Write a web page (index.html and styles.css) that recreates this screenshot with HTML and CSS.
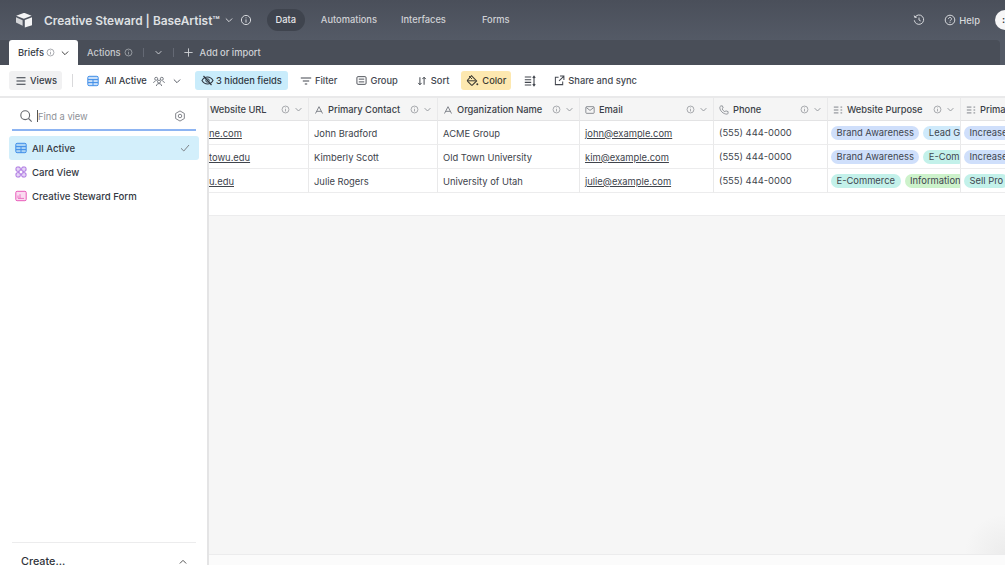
FILE: index.html
```html
<!DOCTYPE html>
<html lang="en">
<head>
<meta charset="utf-8">
<title>Creative Steward | BaseArtist</title>
<link rel="stylesheet" href="styles.css">
</head>
<body>
<svg class="defs" width="0" height="0" aria-hidden="true">
  <defs>
    <symbol id="i-info" viewBox="0 0 12 12"><circle cx="6" cy="6" r="4.6" fill="none" stroke="currentColor"/><path d="M6 3.400v.9M6 5.400v3.200" fill="none" stroke="currentColor"/></symbol>
    <symbol id="i-chev" viewBox="0 0 12 12"><path d="M2.200 4.200 6 8l3.800-3.800" fill="none" stroke="currentColor" stroke-width="1.200"/></symbol>
    <symbol id="i-text" viewBox="0 0 12 12"><path d="M1.800 10.200 6 2l4.200 8.200M3.400 7.600h5.200" fill="none" stroke="currentColor" stroke-width="1.100"/></symbol>
    <symbol id="i-multi" viewBox="0 0 12 12"><path d="M1 2.500h5.500M1 6h5.500M1 9.500h5.500M9 2.500h2M9 6h2M9 9.500h2" fill="none" stroke="currentColor" stroke-width="1.100"/></symbol>
    <symbol id="i-grid" viewBox="0 0 12 12"><rect x=".8" y="1.300" width="10.400" height="9.400" rx="1.300" fill="currentColor" fill-opacity=".28" stroke="currentColor"/><path d="M1 4.600h10M1 7.600h10M6 4.600v6" fill="none" stroke="currentColor"/></symbol>
  </defs>
</svg>
<div class="app">
  <header class="topbar">
    <div class="brand">
      <svg class="logo" viewBox="0 0 18 16"><path d="M8.600 1 1.200 3.800 8.800 6.800 16.600 3.800 9.700 1z" fill="#f4f4f5"/><path d="M9.800 8 17 5.200v8L9.800 15.600z" fill="#f4f4f5"/><path d="M1 5.200 7.600 8.200v5.600L1 10.400z" fill="#d4d5d8"/></svg>
      <span class="brand-name">Creative Steward | BaseArtist™</span>
      <svg class="ico-10 light"><use href="#i-chev"/></svg>
      <svg class="ico-12 light"><use href="#i-info"/></svg>
    </div>
    <nav class="topnav">
      <span class="nav-item active">Data</span>
      <span class="nav-item">Automations</span>
      <span class="nav-item">Interfaces</span>
      <span class="nav-item">Forms</span>
    </nav>
    <div class="top-right">
      <svg class="ico-12 light" viewBox="0 0 12 12"><path d="M1.900 3.300A4.700 4.700 0 1 1 1.300 6.300M1.200 1.500l.7 2 2-.4M6 3.500V6l1.700 1" fill="none" stroke="currentColor"/></svg>
      <span class="help"><svg class="ico-12 light" viewBox="0 0 12 12"><circle cx="6" cy="6" r="4.800" fill="none" stroke="currentColor"/><path d="M4.500 4.800a1.500 1.500 0 1 1 2.200 1.400c-.5.300-.7.500-.7 1.100M6 8.200v.8" fill="none" stroke="currentColor"/></svg>Help</span>
      <span class="avatar">:</span>
    </div>
  </header>

  <div class="tabbar">
    <div class="tabs">
      <span class="tab active">Briefs<svg class="ico-9"><use href="#i-info"/></svg><svg class="ico-10 chev-tab"><use href="#i-chev"/></svg></span>
      <span class="tab second">Actions<svg class="ico-9"><use href="#i-info"/></svg></span>
      <span class="tab-sep"></span>
      <svg class="ico-9 light"><use href="#i-chev"/></svg>
      <span class="tab-sep sep-end"></span>
      <span class="tab add"><svg class="ico-11" viewBox="0 0 12 12"><path d="M6 1.500v9M1.500 6h9" fill="none" stroke="currentColor"/></svg>Add or import</span>
    </div>
  </div>

  <div class="toolbar">
    <span class="tool views"><svg class="ico-12" viewBox="0 0 12 12"><path d="M1.500 2.800h9M1.500 6h9M1.500 9.200h9" fill="none" stroke="currentColor" stroke-width="1.100"/></svg>Views</span>
    <span class="tool-sep"></span>
    <span class="view-name">
      <svg class="ico-12 blue"><use href="#i-grid"/></svg>
      <b>All Active</b>
      <svg class="ico-12" viewBox="0 0 12 12"><circle cx="3.200" cy="3.800" r="1.500" fill="none" stroke="currentColor" stroke-width=".8"/><circle cx="8.800" cy="3.800" r="1.500" fill="none" stroke="currentColor" stroke-width=".8"/><circle cx="6" cy="6.600" r="1.500" fill="none" stroke="currentColor" stroke-width=".8"/><path d="M3.400 11c0-1.500 1.100-2.400 2.600-2.400s2.600.9 2.600 2.400M.6 8c0-1 .8-1.800 1.800-1.800M11.400 8c0-1-.8-1.800-1.800-1.800" fill="none" stroke="currentColor" stroke-width=".8"/></svg>
      <svg class="ico-10 chev-view"><use href="#i-chev"/></svg>
    </span>
    <span class="tool hidden-fields"><svg class="ico-13" viewBox="0 0 13 12"><path d="M1 6c1.400-2.300 3.200-3.500 5.500-3.500S10.600 3.700 12 6c-1.400 2.300-3.200 3.500-5.500 3.500S2.400 8.300 1 6z" fill="none" stroke="currentColor" stroke-width="1.100"/><circle cx="6.500" cy="6" r="1.700" fill="none" stroke="currentColor"/><path d="M2.500 1.500l8 9" fill="none" stroke="currentColor" stroke-width="1.200"/></svg>3 hidden fields</span>
    <span class="tool t-filter"><svg class="ico-12" viewBox="0 0 12 12"><path d="M.8 3h10.400M2.800 6h6.400M4.800 9h2.400" fill="none" stroke="currentColor" stroke-width="1.100"/></svg>Filter</span>
    <span class="tool t-group"><svg class="ico-11" viewBox="0 0 12 12"><rect x="1" y="1.800" width="10" height="8.400" rx="1.200" fill="none" stroke="currentColor"/><path d="M3 4.500h6M3 7.500h6" fill="none" stroke="currentColor"/></svg>Group</span>
    <span class="tool t-sort"><svg class="ico-10" viewBox="0 0 12 12"><path d="M3.500 1.500v9M1.500 8.300l2 2.200 2-2.200M8.500 10.500v-9M6.500 3.700l2-2.200 2 2.200" fill="none" stroke="currentColor" stroke-width="1.200"/></svg>Sort</span>
    <span class="tool color"><svg class="ico-13" viewBox="0 0 13 12"><path d="M5.400 1.200 10.600 6.400 6.600 10.400a1 1 0 0 1-1.400 0L1.700 6.900a1 1 0 0 1 0-1.400z" fill="none" stroke="currentColor" stroke-width="1.100"/><path d="M3 1.500l3 3M2 6.300h7.600" fill="none" stroke="currentColor"/><circle cx="11.300" cy="9.800" r="1" fill="currentColor"/></svg>Color</span>
    <svg class="ico-12 row-height" viewBox="0 0 12 12"><path d="M.8 2h6.400M.8 4.700h6.400M.8 7.400h6.400M.8 10h6.400M10 1.200v9.600M8.800 2.800 10 1.200l1.200 1.600M8.800 9.200l1.200 1.600 1.200-1.600" fill="none" stroke="currentColor" stroke-width="1.100"/></svg>
    <span class="tool t-share"><svg class="ico-11" viewBox="0 0 12 12"><path d="M5 2.500H1.500v8h8V7M6.500 1.200h4.300v4.300M10.600 1.400 5.500 6.500" fill="none" stroke="currentColor" stroke-width="1.100"/></svg>Share and sync</span>
  </div>

  <div class="main">
    <aside class="sidebar">
      <div class="find">
        <svg class="ico-14" viewBox="0 0 14 14"><circle cx="6.200" cy="6.200" r="4.400" fill="none" stroke="currentColor" stroke-width="1.100"/><path d="M9.500 9.500l3.200 3.200" fill="none" stroke="currentColor" stroke-width="1.100"/></svg>
        <span class="caret"></span>
        <span class="find-text">Find a view</span>
        <svg class="ico-12 gear" viewBox="0 0 13 13"><path d="M6.500 1 11.200 3.750V9.250L6.500 12 1.800 9.250V3.750z" fill="none" stroke="currentColor" stroke-linejoin="round"/><circle cx="6.500" cy="6.500" r="1.900" fill="none" stroke="currentColor"/></svg>
      </div>
      <ul class="view-list">
        <li class="view-item selected"><svg class="ico-12 blue"><use href="#i-grid"/></svg>All Active<svg class="ico-10 check" viewBox="0 0 10 10"><path d="M1 5.300 3.800 8 9 2" fill="none" stroke="currentColor"/></svg></li>
        <li class="view-item"><svg class="ico-12 purple" viewBox="0 0 12 12"><rect x="1" y="1" width="4.300" height="4.300" rx="1.300" fill="currentColor" fill-opacity=".3" stroke="currentColor"/><rect x="6.700" y="1" width="4.300" height="4.300" rx="1.300" fill="currentColor" fill-opacity=".3" stroke="currentColor"/><rect x="1" y="6.700" width="4.300" height="4.300" rx="1.300" fill="currentColor" fill-opacity=".3" stroke="currentColor"/><rect x="6.700" y="6.700" width="4.300" height="4.300" rx="1.300" fill="currentColor" fill-opacity=".3" stroke="currentColor"/></svg>Card View</li>
        <li class="view-item"><svg class="ico-12 pink" viewBox="0 0 12 12"><rect x=".8" y="1.300" width="10.400" height="9.400" rx="1.300" fill="currentColor" fill-opacity=".22" stroke="currentColor"/><path d="M3 8.200V5.500M5 8.200V4.200M3 8.400h6" fill="none" stroke="currentColor" stroke-width=".8"/></svg>Creative Steward Form</li>
      </ul>
      <div class="create"><span>Create...</span><svg class="ico-10 flip"><use href="#i-chev"/></svg></div>
    </aside>

    <section class="grid-area">
      <div class="grid">
        <div class="cell head first"><span class="hname">Website URL</span><svg class="ico-9 hi"><use href="#i-info"/></svg><svg class="ico-9 hc"><use href="#i-chev"/></svg></div>
        <div class="cell head"><svg class="ico-10 ht"><use href="#i-text"/></svg><span class="hname">Primary Contact</span><svg class="ico-9 hi"><use href="#i-info"/></svg><svg class="ico-9 hc"><use href="#i-chev"/></svg></div>
        <div class="cell head"><svg class="ico-10 ht"><use href="#i-text"/></svg><span class="hname">Organization Name</span><svg class="ico-9 hi"><use href="#i-info"/></svg><svg class="ico-9 hc"><use href="#i-chev"/></svg></div>
        <div class="cell head"><svg class="ico-10 ht" viewBox="0 0 12 12"><rect x="1" y="2" width="10" height="8" rx="1" fill="none" stroke="currentColor"/><path d="M1.500 3 6 6.500 10.500 3" fill="none" stroke="currentColor"/></svg><span class="hname">Email</span><svg class="ico-9 hi"><use href="#i-info"/></svg><svg class="ico-9 hc"><use href="#i-chev"/></svg></div>
        <div class="cell head"><svg class="ico-10 ht" viewBox="0 0 12 12"><path d="M2 1.200 4 1l1 2.600-1.200 1.100c.6 1.500 1.800 2.700 3.300 3.400L8.300 7l2.700 1-.2 2c-.1.600-.6 1-1.200 1C4.900 10.800 1.200 7.100 1 3.200c0-1 .4-1.800 1-2z" fill="none" stroke="currentColor" stroke-width=".9"/></svg><span class="hname">Phone</span><svg class="ico-9 hi"><use href="#i-info"/></svg><svg class="ico-9 hc"><use href="#i-chev"/></svg></div>
        <div class="cell head"><svg class="ico-10 ht"><use href="#i-multi"/></svg><span class="hname">Website Purpose</span><svg class="ico-9 hi"><use href="#i-info"/></svg><svg class="ico-9 hc"><use href="#i-chev"/></svg></div>
        <div class="cell head last"><svg class="ico-10 ht"><use href="#i-multi"/></svg><span class="hname">Prima</span></div>

        <div class="cell first"><a class="link">ne.com</a></div>
        <div class="cell">John Bradford</div>
        <div class="cell">ACME Group</div>
        <div class="cell"><a class="link">john@example.com</a></div>
        <div class="cell phone">(555) 444-0000</div>
        <div class="cell pills"><span class="pill p-blue">Brand Awareness</span><span class="pill p-sky">Lead G</span></div>
        <div class="cell pills last"><span class="pill p-blue">Increase</span></div>

        <div class="cell first"><a class="link">towu.edu</a></div>
        <div class="cell">Kimberly Scott</div>
        <div class="cell">Old Town University</div>
        <div class="cell"><a class="link">kim@example.com</a></div>
        <div class="cell phone">(555) 444-0000</div>
        <div class="cell pills"><span class="pill p-blue">Brand Awareness</span><span class="pill p-teal">E-Com</span></div>
        <div class="cell pills last"><span class="pill p-blue">Increase</span></div>

        <div class="cell first"><a class="link">u.edu</a></div>
        <div class="cell">Julie Rogers</div>
        <div class="cell">University of Utah</div>
        <div class="cell"><a class="link">julie@example.com</a></div>
        <div class="cell phone">(555) 444-0000</div>
        <div class="cell pills"><span class="pill p-teal">E-Commerce</span><span class="pill p-green">Information</span></div>
        <div class="cell pills last"><span class="pill p-teal">Sell Pro</span></div>
      </div>
      <div class="add-row"></div>
      <div class="canvas"></div>
      <div class="footer"></div>
    </section>
  </div>
</div>
</body>
</html>
```

FILE: styles.css
```css
* { box-sizing: border-box; }
html, body { margin: 0; height: 100%; overflow: hidden; }
body { font-family: Inter, "Liberation Sans", sans-serif; font-size: 9.4px; color: #333842; background: #fff; }
.defs { position: absolute; }
svg { display: block; flex: none; }
.ico-9 { width: 9px; height: 9px; }
.ico-10 { width: 10px; height: 10px; }
.ico-11 { width: 11px; height: 11px; }
.ico-12 { width: 12px; height: 12px; }
.ico-13 { width: 13px; height: 13px; }
.ico-14 { width: 14px; height: 14px; }
.light { color: #d5d7db; }
.blue { color: #3f8ee8; }
.purple { color: #a86fe0; }
.pink { color: #e85bb9; }

.app { display: flex; flex-direction: column; height: 565px; width: 1005px; overflow: hidden; }

/* top bar */
.topbar { height: 40px; flex: none; display: flex; align-items: center; padding-left: 15px; background: linear-gradient(#4a4f5a, #545a66); color: #e6e7e9; }
.brand { display: flex; align-items: center; }
.logo { width: 18px; height: 16px; }
.brand-name { margin-left: 11px; font-size: 11.900px; font-weight: 600; color: #dfe0e3; white-space: nowrap; }
.brand .ico-10 { margin-left: 4px; }
.brand .ico-12 { margin-left: 6px; }
.topnav { display: flex; align-items: center; margin-left: 15px; font-size: 9.300px; }
.nav-item { height: 22px; line-height: 22px; font-weight: 500; color: #cfd1d5; white-space: nowrap; }
.nav-item:nth-child(1) { width: 38px; text-align: center; margin-right: 16px; }
.nav-item:nth-child(2) { margin-right: 24px; }
.nav-item:nth-child(3) { margin-right: 36px; }
.nav-item.active { background: #3f444e; border-radius: 11px; color: #e6e7e9; }
.top-right { margin-left: auto; display: flex; align-items: center; }
.help { display: flex; align-items: center; gap: 3px; margin-left: 19px; font-weight: 500; color: #d8dadd; }
.avatar { width: 20px; height: 20px; margin-left: 15px; margin-right: -10px; border-radius: 50%; background: #f6f6f7; color: #333; padding-left: 7px; line-height: 19px; font-weight: 700; }

/* tabs */
.tabbar { height: 25px; flex: none; background: #545a66; }
.tabs { height: 25px; margin-right: 5px; background: #494e58; border-top-right-radius: 4px; display: flex; align-items: flex-end; padding-left: 9px; color: #c8cace; font-weight: 500; font-size: 9.300px; }
.tab { display: flex; align-items: center; height: 25px; gap: 2px; white-space: nowrap; }
.tab.active { width: 69px; padding-left: 9px; background: #fff; color: #333842; border-radius: 3px 3px 0 0; font-weight: 500; }
.tab.active .ico-9 { color: #8d9097; }
.chev-tab { margin-left: 3px; color: #444; }
.tab.second { margin-left: 9px; gap: 3px; }
.tab.second .ico-9 { color: #aeb1b7; }
.tab-sep { width: 1px; height: 9px; background: #646974; margin: 0 10px 8px 10px; }
.tab-sep.sep-end { margin-right: 9px; }
.tabs > .ico-9 { margin-bottom: 8px; }
.tab.add { gap: 6px; color: #d0d2d6; }

/* toolbar */
.toolbar { height: 33px; flex: none; display: flex; align-items: center; padding-left: 9px; border-bottom: 2px solid #e9e9ea; color: #43474f; font-weight: 500; font-size: 9.300px; }
.tool { display: flex; align-items: center; gap: 3px; height: 19px; border-radius: 3px; white-space: nowrap; }
.views { background: #f1f1f2; padding: 0 5px 0 6px; color: #333842; width: 53px; }
.tool-sep { width: 1px; height: 13px; background: #d9d9db; margin: 0 14px 0 10px; }
.view-name { display: flex; align-items: center; white-space: nowrap; color: #5b5f68; }
.view-name b { font-weight: 500; color: #333842; margin: 0 6px 0 6px; width: 42px; }
.chev-view { margin-left: 7px; }
.hidden-fields { background: #c9ecfb; margin-left: 13px; padding: 0 0 0 6px; color: #2f3742; width: 93px; gap: 2px; }
.t-filter { margin-left: 12px; }
.t-group { margin-left: 19px; }
.t-sort { margin-left: 19px; gap: 4px; }
.color { background: #fde8b0; padding: 0 0 0 5px; width: 50px; color: #3d3b33; margin-left: 12px; margin-right: 13px; gap: 3px; }
.row-height { margin-right: 18px; }

/* main */
.main { flex: 1; min-height: 0; display: flex; }
.sidebar { width: 209px; flex: none; display: flex; flex-direction: column; border-right: 2px solid #e4e4e5; padding: 0 8px 0 9px; }
.find { display: flex; align-items: center; height: 33px; flex: none; margin: 0 3px; padding: 5px 10px 0 7px; border-bottom: 2px solid #8db4f2; color: #66696f; }
.caret { width: 1px; height: 12px; background: #555; margin-left: 4px; }
.find-text { color: #8e9197; font-size: 9.300px; }
.gear { margin-left: auto; color: #787b81; }
.view-list { list-style: none; margin: 5px 0 0; padding: 0; font-size: 9.600px; }
.view-item { display: flex; align-items: center; gap: 5px; height: 24px; padding-left: 6px; color: #333842; font-weight: 500; border-radius: 3px; }
.view-item.selected { background: #d3effb; }
.check { margin-left: auto; margin-right: 9px; color: #7d8288; }
.create { margin: auto 3px 0; height: 23px; flex: none; border-top: 1px solid #ececed; display: flex; align-items: flex-start; justify-content: space-between; padding: 12px 8px 0 9px; font-size: 10.800px; font-weight: 500; color: #2f333a; }
.create span { line-height: 14px; }
.flip { transform: scaleY(-1); margin-top: 2px; color: #555; }

/* grid */
.grid-area { flex: 1; min-width: 0; display: flex; flex-direction: column; background: #f6f6f6; }
.grid { display: grid; grid-template-columns: 100px 129px 142px 134px 114px 133px 44px; grid-template-rows: 23px 24px 24px 24px; background: #fff; flex: none; }
.cell { display: flex; align-items: center; padding: 1px 5px 0; border-right: 1px solid #e9e9ea; border-bottom: 1px solid #ececed; color: #40444c; white-space: nowrap; overflow: hidden; min-width: 0; }
.cell.first { padding-left: 0; }
.cell.last { border-right: 0; }
.cell.phone { padding: 0 0 1px 5px; }
.head { background: #f5f5f5; border-bottom: 1px solid #e3e3e4; color: #3b3f47; font-size: 9.300px; }
.hname { font-weight: 500; }
.first .hname { margin-left: 1px; }
.ht { color: #777b82; margin-right: 4px; }
.head .hi { margin-left: auto; color: #8f9297; }
.head .hc { margin-left: 4px; color: #8f9297; }
.link { text-decoration: underline; color: #40444c; }
.pills { gap: 4px; padding: 0 0 0 3px; }
.pill { flex: none; height: 14px; line-height: 14px; padding: 0 5.500px; border-radius: 7px; color: #41464f; }
.p-blue { background: #cfdffb; }
.p-sky { background: #cfeafb; }
.p-teal { background: #c3f1ea; }
.p-green { background: #cdf2cb; }
.add-row { height: 23px; flex: none; background: #fff; border-bottom: 1px solid #ececed; }
.canvas { flex: 1; background: radial-gradient(circle 40px at 100% 100%, #ececec, #f6f6f6); }
.footer { height: 11px; flex: none; background: #fbfbfb; border-top: 1px solid #ececed; }
```
